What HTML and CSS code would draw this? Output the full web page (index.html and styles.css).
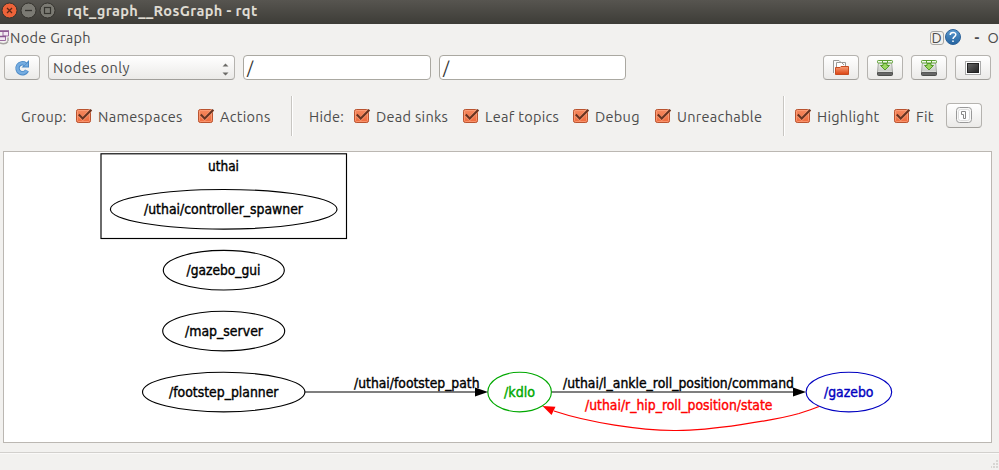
FILE: index.html
```html
<!DOCTYPE html>
<html lang="en">
<head>
<meta charset="utf-8">
<title>rqt_graph__RosGraph - rqt</title>
<link rel="stylesheet" href="styles.css">
</head>
<body>
<svg class="defs" width="0" height="0" aria-hidden="true">
  <defs>
    <linearGradient id="orange" x1="0" y1="0" x2="0" y2="1"><stop offset="0" stop-color="#f58a60"/><stop offset="1" stop-color="#ee6a3c"/></linearGradient>
    <linearGradient id="folder" x1="0" y1="0" x2="0" y2="1"><stop offset="0" stop-color="#f7a079"/><stop offset="1" stop-color="#dc4210"/></linearGradient>
    <linearGradient id="help" x1="0" y1="0" x2="0" y2="1"><stop offset="0" stop-color="#5b9bd0"/><stop offset="1" stop-color="#23629f"/></linearGradient>
    <linearGradient id="screen" x1="0" y1="0" x2="1" y2="1"><stop offset="0" stop-color="#666"/><stop offset="1" stop-color="#222"/></linearGradient>
    <linearGradient id="drive" x1="0" y1="0" x2="0" y2="1"><stop offset="0" stop-color="#f4f5f3"/><stop offset="1" stop-color="#c4c6c2"/></linearGradient>
    <symbol id="check" viewBox="0 0 18 16">
      <rect x="1.5" y="1.5" width="14" height="13" rx="1.8" fill="url(#orange)" stroke="#b9532f"/>
      <rect x="2.5" y="2.5" width="12" height="11" rx="1" fill="none" stroke="#ffab88" stroke-opacity=".6"/>
      <path d="M4.2 7.6 7.7 10.8 16 2" fill="none" stroke="#ffb799" stroke-width="3.4" stroke-opacity=".5"/>
      <path d="M3.8 6.600 7.700 10.600 16.400 1.800" fill="none" stroke="#673421" stroke-width="2.100"/>
    </symbol>
    <symbol id="save" viewBox="0 0 18 18">
      <path d="M1.500 13 2.500 2.500H15.500L16.500 13Z" fill="url(#drive)" stroke="#a8aaa6"/>
      <rect x="1.500" y="13" width="15" height="3.500" rx="1" fill="#666" stroke="#4b4d4a"/>
      <path d="M2 12.500H16" stroke="#d7d9d5"/>
      <rect x="1.500" y="1.500" width="15" height="2.500" rx=".8" fill="#f4faef" stroke="#5b9e30"/>
      <path d="M6.500 2V4M11.500 2V4" stroke="#5b9e30"/>
      <path d="M7 4.500H11V6.500H13.500L9 11 4.500 6.500H7Z" fill="#9bd660" stroke="#559a29"/>
    </symbol>
  </defs>
</svg>
<header class="titlebar">
  <svg class="controls" width="60" height="24" viewBox="0 0 60 24">
    <circle cx="9.5" cy="10.5" r="7.5" fill="#ed6339" stroke="#34322d"/>
    <path d="M7 8 12 13M12 8 7 13" stroke="#5c2817" stroke-width="1.3"/>
    <circle cx="28.5" cy="10.5" r="7.5" fill="#7b7a73" stroke="#34322d"/>
    <path d="M25 10.5H32" stroke="#35342f" stroke-width="1.3"/>
    <circle cx="47.500" cy="10.5" r="7.500" fill="#7b7a73" stroke="#34322d"/>
    <rect x="44.500" y="7.500" width="6" height="6" fill="none" stroke="#35342f" stroke-width="1.2"/>
  </svg>
  <h1 class="title">rqt_graph__RosGraph - rqt</h1>
</header>
<div class="dock">
  <svg class="dock-icon" width="10" height="18" viewBox="0 0 10 18">
    <path d="M0 3.500H8.500V8H3V4" fill="#f2e6f2" stroke="#9a689f"/>
    <path d="M0 8.500H5.500V12.500H0" fill="#f2e6f2" stroke="#9a689f"/>
    <path d="M0 3H9M0 8.500H6" stroke="#8a5590" stroke-width="1.600"/>
    <path d="M0 15Q5 17 8 13.500M8 9.500V13" fill="none" stroke="#a5a3a0" stroke-width="1.500"/>
  </svg>
  <span class="dock-name">Node Graph</span>
  <span class="dock-d">D</span>
  <svg class="dock-help" width="18" height="18" viewBox="0 0 18 18">
    <circle cx="9" cy="9" r="7.500" fill="url(#help)" stroke="#2d639a"/>
    <path d="M6.200 7C6.200 3.500 12 3.700 11.800 6.800 11.700 8.700 9 8.700 9 11M9 12.500V14" fill="none" stroke="#fff" stroke-width="1.500"/>
  </svg>
  <span class="dock-minus">-</span>
  <span class="dock-o">O</span>
</div>
<div class="toolbar">
  <button class="btn refresh"><svg width="18" height="18" viewBox="0 0 18 18"><path d="M14 11.500A5 5 0 1 1 12.500 5.200" fill="none" stroke="#4a89c6" stroke-width="4.400"/><path d="M16 1V8.500H8.500Z" fill="#4a89c6"/><path d="M13.800 11.500A5 5 0 1 1 12.500 5.200" fill="none" stroke="#75ace0" stroke-width="2.600"/><path d="M15 3.500V7.500H11Z" fill="#75ace0"/></svg></button>
  <div class="select"><span class="select-text">Nodes only</span><svg width="7" height="13" viewBox="0 0 7 13"><path d="M.5 3.500 3.500.5 6.500 3.500ZM.5 9.500 3.500 12.500 6.500 9.500Z" fill="#6b6a67"/></svg></div>
  <div class="input">/</div>
  <div class="input second">/</div>
  <div class="tools">
    <button class="btn"><svg width="18" height="18" viewBox="0 0 18 18"><path d="M1.500 14V1.500H7L9 3.500H13.500V9" fill="#fafafa" stroke="#9a9a98"/><path d="M4.500 8V3.500H9.500L12 6" fill="#fff" stroke="#9a9a98"/><path d="M3.500 15.500V8.500H8L9 7.500H16.500V15.500Z" fill="url(#folder)" stroke="#c64b20"/></svg></button>
    <button class="btn"><svg width="18" height="18"><use href="#save"/></svg></button>
    <button class="btn"><svg width="18" height="18"><use href="#save"/></svg></button>
    <button class="btn"><svg width="18" height="18" viewBox="0 0 18 18"><rect x="1.500" y="2.500" width="15" height="13" fill="#fff" stroke="#aaa"/><rect x="3.500" y="4.500" width="11" height="9" fill="url(#screen)" stroke="#222"/></svg></button>
  </div>
</div>
<div class="options">
  <span class="label group">Group:</span>
  <label class="opt namespaces"><svg width="18" height="16"><use href="#check"/></svg><span>Namespaces</span></label>
  <label class="opt actions"><svg width="18" height="16"><use href="#check"/></svg><span>Actions</span></label>
  <i class="rule"></i>
  <span class="label hide">Hide:</span>
  <label class="opt dead"><svg width="18" height="16"><use href="#check"/></svg><span>Dead sinks</span></label>
  <label class="opt leaf"><svg width="18" height="16"><use href="#check"/></svg><span>Leaf topics</span></label>
  <label class="opt debug"><svg width="18" height="16"><use href="#check"/></svg><span>Debug</span></label>
  <label class="opt unreachable"><svg width="18" height="16"><use href="#check"/></svg><span>Unreachable</span></label>
  <i class="rule"></i>
  <label class="opt highlight"><svg width="18" height="16"><use href="#check"/></svg><span>Highlight</span></label>
  <label class="opt fit"><svg width="18" height="16"><use href="#check"/></svg><span>Fit</span></label>
  <button class="btn"><svg width="18" height="18" viewBox="0 0 18 18"><rect x="1.500" y="1.500" width="15" height="15" rx="3" fill="#f8f8f7" stroke="#999"/><rect x="3.500" y="3.500" width="11" height="11" rx="2" fill="#fff" stroke="#ddd"/><path d="M6.500 5.500H10.500V12.500H8.500V8.500H6.500Z" fill="#fff" stroke="#888"/></svg></button>
</div>
<main class="canvas">
  <svg class="graph" width="987" height="290" viewBox="4 152 987 290">
    <g fill="none" stroke="#000" stroke-width="1.150">
      <rect x="101" y="153.800" width="245.500" height="84.700"/>
      <ellipse cx="223.700" cy="209.300" rx="113.300" ry="19.800"/>
      <ellipse cx="223.800" cy="270.200" rx="60.500" ry="19.800"/>
      <ellipse cx="223.700" cy="331" rx="61" ry="19.800"/>
      <ellipse cx="223.700" cy="392" rx="81.200" ry="19.800"/>
      <path d="M305 392H476M551.500 392H794"/>
      <ellipse cx="519.600" cy="392" rx="31.800" ry="19.800" stroke="#00a800"/>
      <ellipse cx="848.900" cy="392" rx="42.800" ry="19.800" stroke="#0000c0"/>
      <path d="M554 411C590 423 640 430 674 430.500 710 431 775 420 799 413.500 807 411 813 409 819 406.500" stroke="#f00"/>
    </g>
    <path d="M475 387.500 488 392 475 396.500ZM793 387.500 806 392 793 396.500Z"/>
    <path d="M542.500 406 555.500 406.800 551.500 415Z" fill="#f00"/>
    <g class="names">
      <text x="208" y="171" textLength="31" lengthAdjust="spacingAndGlyphs">uthai</text>
      <text x="144" y="213.500" textLength="159" lengthAdjust="spacingAndGlyphs">/uthai/controller_spawner</text>
      <text x="186.500" y="274.500" textLength="74" lengthAdjust="spacingAndGlyphs">/gazebo_gui</text>
      <text x="185" y="335.500" textLength="78" lengthAdjust="spacingAndGlyphs">/map_server</text>
      <text x="169" y="396.500" textLength="109.500" lengthAdjust="spacingAndGlyphs">/footstep_planner</text>
      <text x="354" y="388" textLength="125.500" lengthAdjust="spacingAndGlyphs">/uthai/footstep_path</text>
      <text x="504" y="396.500" textLength="31" lengthAdjust="spacingAndGlyphs" class="green">/kdlo</text>
      <text x="563" y="388" textLength="231" lengthAdjust="spacingAndGlyphs">/uthai/l_ankle_roll_position/command</text>
      <text x="585" y="409.500" textLength="187.500" lengthAdjust="spacingAndGlyphs" class="red">/uthai/r_hip_roll_position/state</text>
      <text x="824" y="396.500" textLength="49.500" lengthAdjust="spacingAndGlyphs" class="blue">/gazebo</text>
    </g>
  </svg>
</main>
<footer class="status"><svg width="8" height="12" viewBox="0 0 8 12"><path d="M5 3H7M2 6H4M5 6H7M0 9H1M2 9H4M5 9H7" stroke="#cfcdca" stroke-width="1.500"/></svg></footer>
</body>
</html>
```
FILE: styles.css
```css
* { box-sizing: border-box; }
body {
  margin: 0;
  width: 999px;
  height: 470px;
  overflow: hidden;
  display: flex;
  flex-direction: column;
  background: #f2f1ef;
  color: #4c4c4c;
  font: 14.5px/20px Ubuntu, "Noto Sans", sans-serif;
  letter-spacing: .3px;
  white-space: nowrap;
}
svg { display: block; flex: none; }
.defs { position: absolute; }
.titlebar {
  height: 24px;
  display: flex;
  background: linear-gradient(#575550, #3d3c37);
}
.title {
  margin: 1px 0 0 7px;
  color: #dfdbd2;
  font-size: 14.6px;
  line-height: 20px;
  font-weight: 700;
  letter-spacing: .38px;
}
.dock { height: 28px; display: flex; align-items: center; }
.dock-icon { margin-top: -2px; }
.dock-name { width: 82px; }
.dock-d {
  width: 14px;
  height: 14px;
  margin: -1px 0 0 838px;
  border: 1px solid #aaa8a4;
  border-radius: 3px;
  line-height: 12px;
  text-align: center;
  letter-spacing: 0;
}
.dock-help { margin-top: -2px; }
.dock-minus { margin-left: 13px; width: 13px; font-weight: 700; }
.toolbar { height: 31px; display: flex; align-items: center; padding-left: 4px; }
.btn {
  width: 36px;
  height: 25px;
  padding: 0;
  display: flex;
  align-items: center;
  justify-content: center;
  border: 1px solid #b5b3af;
  border-bottom-color: #a19f9b;
  border-radius: 4px;
  background: linear-gradient(#fff, #ebeae8);
  flex: none;
}
.select {
  width: 187px;
  height: 25px;
  margin-left: 8px;
  padding: 0 5px 0 4px;
  display: flex;
  align-items: center;
  justify-content: space-between;
  border: 1px solid #b5b3af;
  border-bottom-color: #a19f9b;
  border-radius: 4px;
  background: linear-gradient(#fff, #ebeae8);
  letter-spacing: .45px;
}
.select svg { margin-top: 4px; }
.input {
  width: 188px;
  height: 25px;
  margin-left: 8px;
  padding-left: 3px;
  border: 1px solid #aaa8a1;
  border-radius: 4px;
  background: #fff;
  color: #333;
  font-size: 17px;
  line-height: 23px;
}
.second { width: 187px; }
.tools { display: flex; gap: 8px; margin-left: 197px; }
.options { height: 67px; display: flex; align-items: center; padding-left: 21px; }
.opt { display: flex; align-items: center; gap: 5px; flex: none; }
.opt svg { margin-top: -1px; }
.group { width: 54px; }
.namespaces { width: 122px; }
.actions { width: 94px; }
.rule { width: 2px; height: 40px; margin-top: -2px; border-left: 1px solid #c8c6c2; border-right: 1px solid #fff; }
.hide { width: 60px; padding-left: 16px; }
.dead { width: 109px; }
.leaf { width: 110px; }
.debug { width: 82px; }
.unreachable { width: 129px; }
.highlight { width: 99px; margin-left: 9px; }
.fit { width: 53px; }
.options .btn { margin-top: -3px; }
.canvas { width: 989px; height: 292px; margin: 1px 0 0 3px; border: 1px solid #bbb7b2; background: #fff; flex: none; }
.names { font: 13.2px "DejaVu Sans", sans-serif; letter-spacing: 0; fill: #000; stroke: #000; stroke-width: .4px; }
.names .green { fill: #00a800; stroke: #00a800; }
.names .red { fill: #f00; stroke: #f00; }
.names .blue { fill: #0000c0; stroke: #0000c0; }
.status { margin-top: 9px; height: 18px; border-top: 1px solid #d2d0cd; box-shadow: inset 0 1px #faf9f8; display: flex; justify-content: flex-end; align-items: flex-end; }
```
